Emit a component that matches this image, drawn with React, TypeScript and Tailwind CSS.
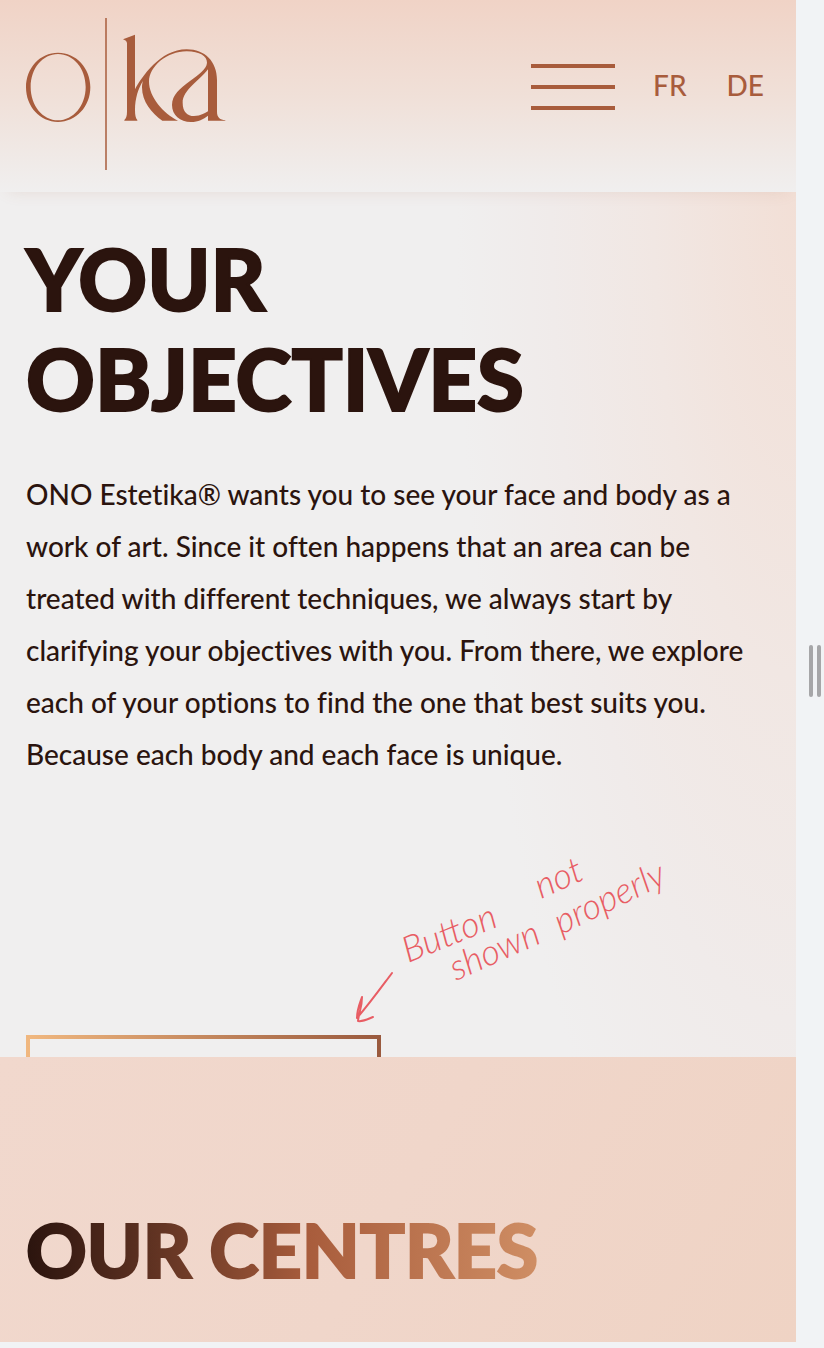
function Logo() {
  return (
    <svg viewBox="75 54 606 456" className="h-[152px] w-[202px]" fill="#a85c3c" fillRule="evenodd" aria-hidden="true">
      <path d="M174 158C228 158 271 204 271 262S228 366 174 366 78 320 78 262 120 158 174 158ZM174 162C128 162 92 205 92 261S128 361 174 361 257 317 257 261 220 162 174 162Z" />
      <path d="M315 54H321V510H315Z" opacity=".75" />
      <path d="M369 118L405 104V268C425 232 480 148 560 148C615 148 651 185 651 240V335C651 352 660 359 676 361V362H624V347C610 358 595 366 573 366C540 366 516 345 516 315C516 285 540 265 570 243C595 224 620 208 621 188C621 168 600 155 560 154C500 154 447 200 447 245C447 290 490 340 534 362H487C455 340 426 305 426 262C426 254 427 250 429 243C415 265 405 295 405 330C405 345 407 355 412 360V362H373V360C378 356 381 348 381 335V130C381 124 376 120 369 118ZM624 208C600 240 548 270 548 308C548 335 562 348 582 348C602 348 618 338 624 334Z" />
    </svg>
  );
}

function Note() {
  return (
    <svg
      viewBox="340 840 350 190"
      className="pointer-events-none absolute left-[340px] top-[648px] h-[190px] w-[350px]"
      fill="none"
      stroke="#e85d64"
      strokeWidth="2"
      strokeLinecap="round"
      strokeLinejoin="round"
    >
      <path d="M392 973C380 989 370 1003 357 1018C357 1009 360 1003 362 997C362 1007 359 1012 358 1021C363 1022 368 1019 373 1017" />
      <g fill="#e85d64" stroke="none" fontStyle="italic" fontSize="36" className="font-light">
        <text transform="translate(408 963) rotate(-22)">Button</text>
        <text transform="translate(541 899) rotate(-24)">not</text>
        <text transform="translate(456 981) rotate(-24)">shown</text>
        <text transform="translate(561 935) rotate(-26)">properly</text>
      </g>
    </svg>
  );
}

export default function App() {
  return (
    <div className="flex min-h-screen bg-[#f1f3f5] font-['Lato',sans-serif] text-[#2b140e]">
      <div className="min-w-0 flex-1">
        <header className="relative z-10 flex h-48 items-start justify-between bg-linear-to-b from-[#f0d3c6] via-[#f0e0d8] to-[#f0efef] pr-8 pl-[25px] shadow-[0_6px_16px_-8px_rgba(168,92,60,0.16)]">
          <a href="#home" aria-label="oka" className="mt-[18px]">
            <Logo />
          </a>
          <nav className="mt-16 flex items-start text-[28px] leading-[42px] font-medium text-[#a85c3c]">
            <button aria-label="Menu" className="mr-[38px] flex w-[84px] flex-col gap-[17px]">
              <span className="h-1 w-full bg-[#a85c3c]" />
              <span className="h-1 w-full bg-[#a85c3c]" />
              <span className="h-1 w-full bg-[#a85c3c]" />
            </button>
            <a href="#fr" className="mr-10">FR</a>
            <a href="#de">DE</a>
          </nav>
        </header>
        <main>
          <section className="relative bg-[radial-gradient(ellipse_340px_1150px_at_100%_0%,#f2dfd6_0%,#f1e7e3_42%,#f0ebea_72%,#f0efef_100%)] bg-[#f0efef] px-[26px] pt-9">
            <h1 className="max-w-[600px] text-[85px] leading-[100px] font-black [-webkit-text-stroke:2px_currentColor]">
              YOUR OBJECTIVES
            </h1>
            <p className="mt-10 max-w-[730px] text-[28px] leading-[52px] font-medium [font-variant-ligatures:none]">
              ONO Estetika® wants you to see your face and body as a work of art. Since it often happens that an area can be
              treated with different techniques, we always start by clarifying your objectives with you. From there, we
              explore each of your options to find the one that best suits you. Because each body and each face is unique.
            </p>
            <div className="mt-[255px] h-[22px] overflow-hidden">
              <button
                aria-label="Objectives"
                className="h-20 w-[355px] border-4 [border-image:linear-gradient(to_right,#f0b77f,#9a5a3e)_1]"
              />
            </div>
            <Note />
          </section>
          <section className="bg-[linear-gradient(120deg,#f1d8cd_0%,#f0d6ca_50%,#efd3c4_100%)] px-[26px] pt-36 pb-[45px]">
            <h2 className="w-fit bg-linear-to-r from-[#2b140e] via-[#a85c3c] via-55% to-[#cf8e64] bg-clip-text text-[75px] leading-[96px] font-black text-transparent [-webkit-text-stroke:2px_transparent]">
              OUR CENTRES
            </h2>
          </section>
        </main>
      </div>
      <div role="separator" aria-orientation="vertical" className="relative z-20 flex h-[1342px] w-7 shrink-0 items-center justify-end gap-1 bg-[#f1f3f5] pr-[3px]">
        <span className="h-[52px] w-1 rounded-full bg-[#a6a6a8]" />
        <span className="h-[52px] w-1 rounded-full bg-[#a6a6a8]" />
      </div>
    </div>
  );
}
